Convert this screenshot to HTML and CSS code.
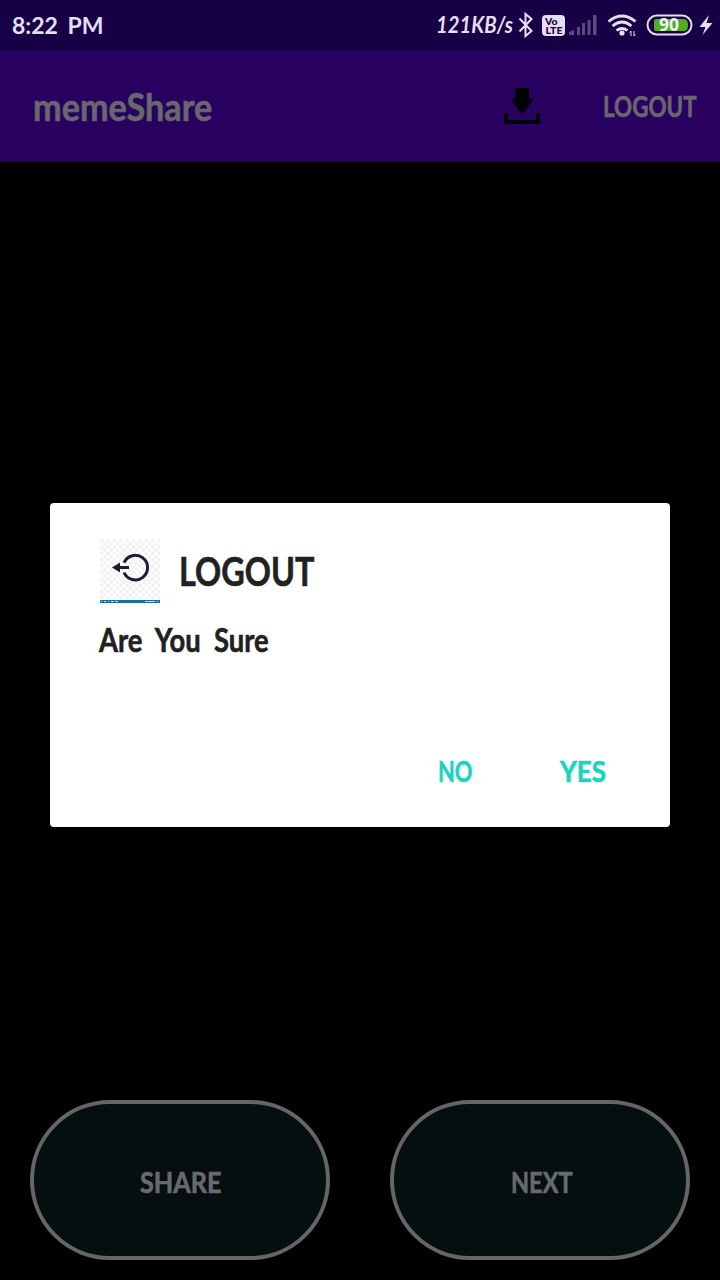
FILE: index.html
```html
<!DOCTYPE html>
<html lang="en">
<head>
<meta charset="utf-8">
<title>memeShare</title>
<link rel="stylesheet" href="styles.css">
</head>
<body>
<div class="screen">
  <header class="status">
    <span class="label time">8:22 PM</span>
    <div class="status-right">
      <span class="label speed">121KB/s</span>
      <svg class="status-icons" width="204" height="50" viewBox="516 0 204 50">
        <path class="line" d="M519.500 18.500L531.500 31L525.500 36V14L531.500 19L519.500 31.500"/>
        <rect class="light" x="542" y="15" width="23" height="21" rx="4"/>
        <text class="volte" x="545" y="24.500" textLength="12.500" lengthAdjust="spacingAndGlyphs">Vo</text>
        <text class="volte" x="545.500" y="33.500" textLength="17" lengthAdjust="spacingAndGlyphs">LTE</text>
        <path class="signal" d="M569 35v-3l5-2v5zM577 35v-8h3v8zM582 35V23h3v12zM587.500 35V20h3v15zM593 35V15h3.500v20z"/>
        <path class="wifi" d="M608.500 21.500Q622 10.500 635.500 21.500M612.500 26Q622 18 631.500 26M616.500 30.500Q622 26.500 627.500 30.500"/>
        <circle class="light" cx="622" cy="33" r="2.600"/>
        <path class="arrows" d="M631 36V31L629.500 32.500M634 31V36L635.500 34.500"/>
        <rect class="battery" x="647.500" y="15.500" width="44" height="19" rx="9.500"/>
        <path class="charge" d="M656 19h28q4 0 4 6t-4 6h-28q-2 0-2-2v-8q0-2 2-2z"/>
        <text class="percent" x="659" y="31" textLength="20" lengthAdjust="spacingAndGlyphs">90</text>
        <path class="light" d="M709 15l-9.500 12h6l-3 8 10-12h-6z"/>
      </svg>
    </div>
  </header>
  <nav class="appbar">
    <h1 class="label brand">memeShare</h1>
    <svg class="download" width="36" height="36" viewBox="0 0 36 36"><path d="M11 0h14v11h4.500L18 26.500 6.500 11H11zM0 25h4v7h28v-7h4v11H0z"/></svg>
    <span class="label signout">LOGOUT</span>
  </nav>
  <main class="content">
    <section class="dialog">
      <div class="dialog-head">
        <svg class="dialog-icon" width="60" height="64" viewBox="0 0 60 64">
          <defs><pattern id="check" width="6.400" height="6.400" patternUnits="userSpaceOnUse"><path class="check" d="M0 0h3.200v3.200H0zM3.200 3.200h3.200v3.200H3.200z"/></pattern></defs>
          <rect width="60" height="61" fill="url(#check)"/>
          <path class="ring" d="M24 23.700A12.300 12.300 0 1 1 24 33.500"/>
          <path class="shaft" d="M18 28.500H29"/>
          <path class="head" d="M12 28.500L20 23.500V33.500z"/>
          <rect class="stripe" y="61" width="60" height="3"/>
          <path class="dashes" d="M1 62.500h1M4 62.500h2M8 62.500h1M11 62.500h3M15 62.500h3M45 62.500h10M57 62.500h1"/>
        </svg>
        <h2 class="label dialog-title">LOGOUT</h2>
      </div>
      <p class="label message">Are You Sure</p>
      <div class="actions">
        <span class="label no">NO</span>
        <span class="label yes">YES</span>
      </div>
    </section>
  </main>
  <footer class="footer">
    <div class="pill"><span class="label share">SHARE</span></div>
    <div class="pill"><span class="label next">NEXT</span></div>
  </footer>
</div>
</body>
</html>
```
FILE: styles.css
```css
body { margin: 0; background: #000; }
.screen { width: 720px; height: 1280px; display: flex; flex-direction: column; overflow: hidden; font-family: Lato, "Open Sans", sans-serif; font-weight: 700; }
.label { display: block; margin: 0; white-space: nowrap; line-height: 1; font-weight: 700; transform-origin: left center; -webkit-text-stroke: .6px currentColor; stroke-linejoin: round; }
.status { height: 50px; box-sizing: border-box; padding-left: 12px; background: #180046; color: #e4def0; display: flex; justify-content: space-between; align-items: center; }
.status-right { display: flex; align-items: center; }
.time { font-size: 23px; word-spacing: 4px; -webkit-text-stroke-width: 0; }
.speed { width: 80px; font-size: 22px; font-style: italic; transform: scaleX(.92); -webkit-text-stroke-width: 0; }
.status-icons { display: block; }
.light { fill: #e4def0; }
.line { fill: none; stroke: #e4def0; stroke-width: 2; }
.volte { font: 900 9.5px Lato, sans-serif; fill: #180046; }
.signal { fill: #5d4b80; }
.wifi { fill: none; stroke: #e4def0; stroke-width: 2.7; }
.arrows { fill: none; stroke: #e4def0; stroke-width: 1; }
.battery { fill: none; stroke: #e4def0; stroke-width: 2; }
.charge { fill: #4caf1d; }
.percent { font: 700 17px "Open Sans", sans-serif; fill: #f4f0f8; }
.appbar { height: 112px; box-sizing: border-box; padding-left: 33px; background: #270060; color: #69666d; display: flex; align-items: center; }
.brand { width: 471px; font-size: 38px; transform: scaleX(.9); }
.download { width: 36px; margin-right: 63px; }
.signout { font-size: 28px; transform: scaleX(.8); }
.content { height: 938px; display: flex; flex-direction: column; align-items: center; padding-top: 341px; box-sizing: border-box; }
.dialog { width: 620px; height: 324px; box-sizing: border-box; padding: 36px 49px 0; border-radius: 4px; background: #fff; color: #212121; display: flex; flex-direction: column; }
.dialog-head { display: flex; align-items: center; gap: 19px; padding-left: 1px; }
.dialog-title { font-size: 40px; transform: scaleX(.81); }
.message { margin-top: 21px; font-size: 32px; word-spacing: 8px; transform: scaleX(.855); }
.actions { margin-top: 101px; padding-left: 339px; display: flex; color: #1bd3bf; font-size: 28px; }
.no { width: 122px; transform: scaleX(.78); }
.yes { transform: scaleX(.93); }
.check { fill: #f1f1f1; }
.ring { fill: none; stroke: #1c1d33; stroke-width: 3; }
.shaft { stroke: #1c1d33; stroke-width: 3; }
.head { fill: #1c1d33; }
.stripe { fill: #1b6fa0; }
.dashes { stroke: #c4dce8; stroke-width: 1; }
.footer { display: flex; gap: 60px; padding-left: 30px; }
.pill { width: 300px; height: 160px; box-sizing: border-box; border: 4px solid #666; border-radius: 80px; background: #060f10; color: #686b6b; display: flex; align-items: center; font-size: 28px; }
.share { margin: 3px 0 0 106px; transform: scaleX(.9); }
.next { margin: 3px 0 0 117px; transform: scaleX(.84); }
```
